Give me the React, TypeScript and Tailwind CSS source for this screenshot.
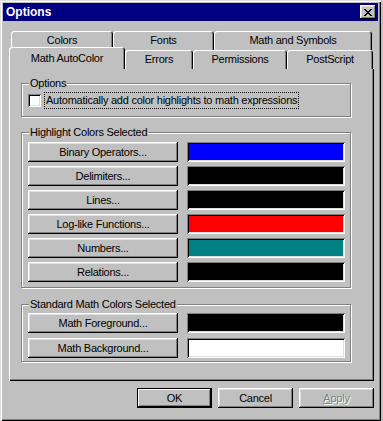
import React from 'react';

// win95-ish bevels
const raised = 'shadow-[inset_-1px_-1px_#000,inset_1px_1px_#fff,inset_-2px_-2px_#808080,inset_2px_2px_#dfdfdf]';
const raisedDefault = 'shadow-[inset_0_0_0_1px_#000,inset_-2px_-2px_#000,inset_2px_2px_#fff,inset_-3px_-3px_#808080]';
const sunken = 'shadow-[inset_1px_1px_#808080,inset_-1px_-1px_#fff,inset_2px_2px_#000,inset_-2px_-2px_#dfdfdf]';

const Button = ({ label, className = '', bevel = raised }: { label: React.ReactNode; className?: string; bevel?: string }) => (
    <div className={`flex items-center justify-center bg-[#c0c0c0] text-black ${bevel} ${className}`}>
        {label}
    </div>
);

const Swatch = ({ color }: { color: string }) => (
    <div className={`w-[158px] h-[20px] ${sunken} ${color}`} />
);

const GroupBox = ({ title, className = '', children }: { title: string; className?: string; children: React.ReactNode }) => (
    <div className={`relative ml-[12px] w-[330px] border border-[#808080] shadow-[inset_1px_1px_#fff,1px_1px_#fff] ${className}`}>
        <span className="absolute -top-[8px] left-[7px] px-[1px] bg-[#c0c0c0] leading-[14px]">{title}</span>
        {children}
    </div>
);

const ColorRow = ({ label, color }: { label: string; color: string }) => (
    <div className="flex gap-[9px] pl-[6px]">
        <Button label={label} className="w-[150px] h-[20px]" />
        <Swatch color={color} />
    </div>
);

const backTab = 'flex items-center justify-center h-[19px] bg-[#c0c0c0] rounded-t-[3px] shadow-[inset_1px_1px_#fff,inset_-1px_0_#000,inset_-2px_0_#808080]';

export default function App() {
    const highlights = [
        { label: 'Binary Operators...', color: 'bg-[#0000ff]' },
        { label: 'Delimiters...', color: 'bg-black' },
        { label: 'Lines...', color: 'bg-black' },
        { label: 'Log-like Functions...', color: 'bg-[#ff0000]' },
        { label: 'Numbers...', color: 'bg-[#008080]' },
        { label: 'Relations...', color: 'bg-black' },
    ];

    return (
        <div
            style={{ fontFamily: '"Liberation Sans", Arial, sans-serif' }}
            className="w-[383px] h-[421px] bg-[#c0c0c0] text-[11px] tracking-[-0.25px] text-black overflow-hidden"
        >
            <div className="w-[381px] h-[421px] p-[3px] flex flex-col shadow-[inset_1px_1px_#dfdfdf,inset_2px_2px_#fff,inset_-1px_-1px_#000,inset_-2px_-2px_#808080]">
                {/* title bar */}
                <div className="h-[18px] bg-[#000080] flex items-center justify-between pl-[3px] pr-[2px]">
                    <span className="text-white font-bold text-[12px] tracking-normal">Options</span>
                    <div className={`w-[16px] h-[14px] bg-[#c0c0c0] flex items-center justify-center ${raised}`}>
                        <svg width="8" height="7" viewBox="0 0 8 7" shapeRendering="crispEdges">
                            <path d="M0 0h2v1h-2zM6 0h2v1h-2zM1 1h2v1h-2zM5 1h2v1h-2zM2 2h4v1h-4zM3 3h2v1h-2zM2 4h4v1h-4zM1 5h2v1h-2zM5 5h2v1h-2zM0 6h2v1h-2zM6 6h2v1h-2z" fill="#000" />
                        </svg>
                    </div>
                </div>

                {/* tabs, back row */}
                <div className="relative flex mt-[10px] ml-[8px]">
                    <div className={`${backTab} w-[102px]`}>Colors</div>
                    <div className={`${backTab} w-[101px]`}>Fonts</div>
                    <div className={`${backTab} w-[158px]`}>Math and Symbols</div>
                </div>
                {/* tabs, front row */}
                <div className="relative z-10 flex items-start h-[21px] -mt-[3px] ml-[6px]">
                    <div className="flex items-start justify-center pt-[3px] w-[116px] h-[22px] bg-[#c0c0c0] rounded-t-[3px] shadow-[inset_1px_1px_#fff,inset_-1px_0_#000,inset_-2px_0_#808080]">
                        Math AutoColor
                    </div>
                    <div className={`${backTab} mt-[3px] h-[18px] w-[68px]`}>Errors</div>
                    <div className={`${backTab} mt-[3px] h-[18px] w-[94px]`}>Permissions</div>
                    <div className={`${backTab} mt-[3px] h-[18px] w-[86px]`}>PostScript</div>
                </div>

                {/* panel */}
                <div className="ml-[6px] w-[365px] h-[313px] shadow-[inset_1px_1px_#fff,inset_-1px_-1px_#000,inset_-2px_-2px_#808080] pt-[15px]">
                    <GroupBox title="Options" className="h-[34px] flex items-center pl-[6px] pt-[1px]">
                        <div className="w-[13px] h-[13px] bg-white shadow-[inset_1px_1px_#808080,inset_-1px_-1px_#fff,inset_2px_2px_#000,inset_-2px_-2px_#dfdfdf]" />
                        <span className="ml-[4px] px-[1px] outline outline-1 outline-dotted outline-black leading-[15px]">
                            Automatically add color highlights to math expressions
                        </span>
                    </GroupBox>

                    <GroupBox title="Highlight Colors Selected" className="mt-[15px] h-[156px] pt-[9px] flex flex-col gap-[4px]">
                        {highlights.map((h) => (
                            <ColorRow key={h.label} label={h.label} color={h.color} />
                        ))}
                    </GroupBox>

                    <GroupBox title="Standard Math Colors Selected" className="mt-[16px] h-[58px] pt-[8px] flex flex-col gap-[5px]">
                        <ColorRow label="Math Foreground..." color="bg-black" />
                        <ColorRow label="Math Background..." color="bg-white" />
                    </GroupBox>
                </div>

                {/* dialog buttons */}
                <div className="flex gap-[6px] mt-[7px] pl-[134px]">
                    <Button label="OK" bevel={raisedDefault} className="w-[75px] h-[20px]" />
                    <Button label="Cancel" className="w-[75px] h-[20px]" />
                    <Button
                        label={
                            <span className="text-[#808080] [text-shadow:1px_1px_#fff]">
                                <span className="underline">A</span>pply
                            </span>
                        }
                        className="w-[75px] h-[20px]"
                    />
                </div>
            </div>
        </div>
    );
}
